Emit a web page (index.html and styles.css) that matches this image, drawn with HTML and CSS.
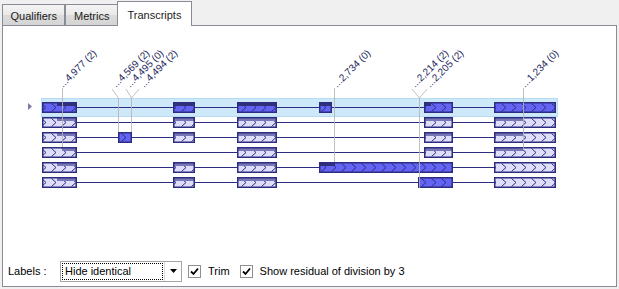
FILE: index.html
```html
<!DOCTYPE html>
<html lang="en">
<head>
  <meta charset="UTF-8" />
  <title>Transcripts</title>
  <link rel="stylesheet" href="styles.css">
</head>
<body>
  <div class="tabs">
    <div class="tab">Qualifiers</div>
    <div class="tab">Metrics</div>
    <div class="tab active">Transcripts</div>
  </div>
  <div class="panel">
    <svg id="map" class="map" width="613" height="230" viewBox="3 26 613 230">
      <defs>
        <pattern id="chev" patternUnits="userSpaceOnUse" x="0" y="102" width="10" height="15">
          <path d="M1.5 1.5 L6 5.5 L1.5 9.5" fill="none" stroke="#2c2c80" stroke-width="1" />
        </pattern>
      </defs>
    </svg>
    <div class="controls">
      <span class="lbl">Labels :</span>
      <div class="combo">
        <span class="combo-text">Hide identical</span>
        <span class="combo-btn">
          <svg width="7" height="4" viewBox="0 0 7 4"><path d="M0 0 H7 L3.5 4 Z" fill="#000" /></svg>
        </span>
      </div>
      <label class="check">
        <span class="box"><svg width="11" height="11" viewBox="0 0 11 11"><path d="M2 5.5 L4.5 8 L9 2.5" fill="none" stroke="#000" stroke-width="1.8" /></svg></span>
        Trim
      </label>
      <label class="check wide">
        <span class="box"><svg width="11" height="11" viewBox="0 0 11 11"><path d="M2 5.5 L4.5 8 L9 2.5" fill="none" stroke="#000" stroke-width="1.8" /></svg></span>
        Show residual of division by 3
      </label>
    </div>
  </div>

<script>
  const NS = "http://www.w3.org/2000/svg";
  const map = document.getElementById("map");

  // [left, right, bright?, band]
  const rows = [
    [[42, 77, 1, [57, 77]], [173, 195, 1, [173, 195]], [237, 277, 1, [237, 277]], [319, 332, 1, [319, 332]], [424, 453, 1, [424, 431]], [494, 556, 1, null]],
    [[42, 77, 0, [57, 77]], [173, 195, 0, [173, 195]], [237, 277, 0, [237, 277]], [424, 453, 0, [424, 453]], [494, 556, 0, [494, 523]]],
    [[42, 77, 0, [57, 77]], [118, 132, 1, null], [173, 195, 0, [173, 195]], [237, 277, 0, [237, 277]], [424, 453, 0, [424, 453]], [494, 556, 0, [494, 523]]],
    [[42, 77, 0, [62, 77]], [237, 277, 0, [237, 277]], [424, 453, 0, [424, 453]], [494, 556, 0, [494, 523]]],
    [[42, 77, 0, [57, 77]], [173, 195, 0, [173, 195]], [237, 277, 0, [237, 277]], [319, 453, 1, [319, 335]], [494, 556, 0, null]],
    [[42, 77, 0, [57, 77]], [173, 195, 0, [173, 195]], [237, 277, 0, [237, 277]], [418, 453, 1, null], [494, 556, 0, null]]
  ];

  const leaders = [
    "62.5,88 62.5,147",
    "112,89 118.5,98 118.5,132",
    "126,89 131.5,98",
    "139,89 131.5,98 131.5,132",
    "334.5,88 334.5,162",
    "412,89 419.5,98",
    "427,89 419.5,98 419.5,188",
    "523.5,88 523.5,150"
  ];

  const labels = [
    [63, "4,977 (2)"], [116, "4,569 (2)"], [130, "4,495 (0)"], [144, "4,494 (2)"],
    [337, "2,734 (0)"], [415, "2,214 (2)"], [430, "2,205 (2)"], [525, "1,234 (0)"]
  ];

  function add(tag, attrs) {
    const e = document.createElementNS(NS, tag);
    for (const k in attrs) e.setAttribute(k, attrs[k]);
    map.appendChild(e);
    return e;
  }

  add("rect", { x: 41.5, y: 98.5, width: 516, height: 18, fill: "#cde8f8", stroke: "#b6dbf2" });
  add("polygon", { points: "28,103 32,106.5 28,110", fill: "#7c7ca8" });

  rows.forEach((exons, i) => {
    const top = 102 + 15 * i;
    add("line", { x1: 42, x2: 556, y1: top + 5.5, y2: top + 5.5, stroke: "#2c2c80" });
    exons.forEach(([l, r, bright, band]) => {
      add("rect", { x: l, y: top, width: r - l, height: 11, fill: bright ? "#6363f4" : "#dedefb" });
      add("rect", { x: l, y: top, width: r - l, height: 11, fill: "url(#chev)" });
      if (band) {
        add("rect", { x: band[0], y: top, width: band[1] - band[0], height: 4, fill: bright ? "#30307a" : "#7878b6" });
      }
      add("rect", { x: l + 0.75, y: top + 0.75, width: r - l - 1.5, height: 9.5, fill: "none", stroke: "#2c2c80", "stroke-width": 1.5 });
    });
  });

  leaders.forEach(p => {
    add("polyline", { points: p, fill: "none", stroke: "#b4b4b4", "stroke-opacity": 0.85 });
  });

  labels.forEach(([x, txt]) => {
    const t = add("text", { class: "mark", transform: `translate(${x},88) rotate(-45)` });
    t.textContent = "..." + txt;
  });
</script>
</body>
</html>
```

FILE: styles.css
```css
body {
  margin: 0;
  width: 619px;
  height: 289px;
  overflow: hidden;
  background: #f0f0f0;
  font-family: "Liberation Sans", Arial, sans-serif;
  font-size: 11px;
  color: #000;
}

.tabs {
  display: flex;
  align-items: flex-end;
  height: 25px;
  padding-left: 2px;
}

.tab {
  height: 20px;
  line-height: 22px;
  padding: 0 7.5px;
  border: 1px solid #898c95;
  border-bottom: none;
  background: linear-gradient(#f4f4f4, #e9e9e9 50%, #dcdcdc 50%, #d4d4d4);
  color: #1c1c1c;
}

.tab.active {
  height: 24px;
  line-height: 26px;
  padding: 0 9.5px;
  margin-left: -1px;
  margin-bottom: -1px;
  background: #fff;
  position: relative;
  z-index: 1;
}

.panel {
  margin: 0 2px;
  height: 260px;
  border: 1px solid #898c95;
  background: #fff;
  display: flex;
  flex-direction: column;
}

.map {
  display: block;
}

.mark {
  font-family: "Liberation Sans", Arial, sans-serif;
  font-size: 10px;
  fill: #1e2860;
}

.controls {
  display: flex;
  align-items: center;
  height: 30px;
  padding-left: 5px;
}

.lbl {
  width: 52px;
}

.combo {
  display: flex;
  width: 120px;
  height: 19px;
  border: 1px solid #a5a5a5;
  background: #fff;
}

.combo-text {
  flex: 1;
  margin: 1px;
  padding-left: 2px;
  border: 1px dotted #000;
  line-height: 15px;
}

.combo-btn {
  width: 16px;
  border-left: 1px solid #dadada;
  display: flex;
  align-items: center;
  justify-content: center;
}

.check {
  display: flex;
  align-items: center;
  gap: 7px;
  margin-left: 6px;
}

.check.wide {
  margin-left: 10px;
}

.box {
  width: 11px;
  height: 11px;
  border: 1px solid #8f8f8f;
  background: #fff;
  display: flex;
}
```
